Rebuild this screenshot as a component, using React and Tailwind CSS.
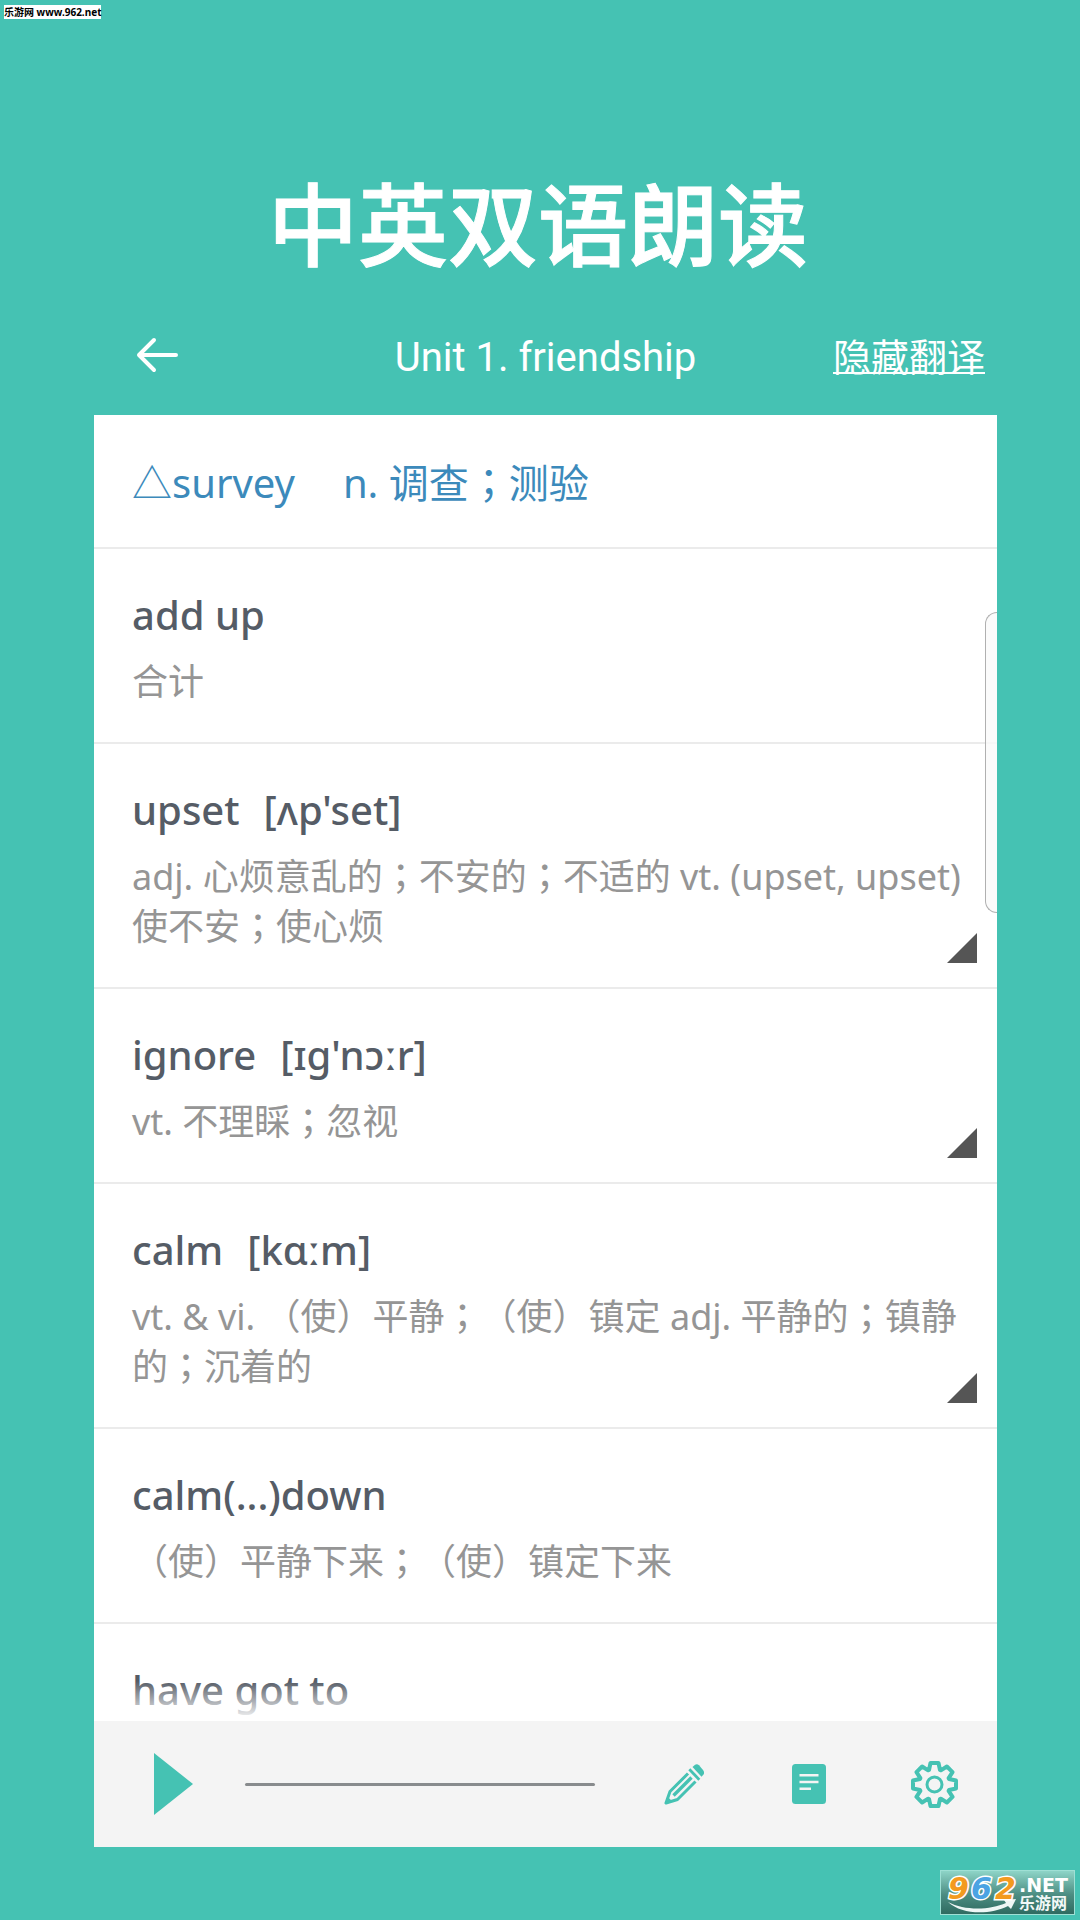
import React, { useState } from 'react';

const words = [
  { id: 1, word: 'add up', meaning: '合计' },
  {
    id: 2,
    word: 'upset',
    phonetic: "[ʌp'set]",
    meaning: 'adj. 心烦意乱的；不安的；不适的 vt. (upset, upset) 使不安；使心烦',
    expandable: true
  },
  {
    id: 3,
    word: 'ignore',
    phonetic: "[ɪg'nɔːr]",
    meaning: 'vt. 不理睬；忽视',
    expandable: true
  },
  {
    id: 4,
    word: 'calm',
    phonetic: '[kɑːm]',
    meaning: 'vt. & vi. （使）平静；（使）镇定 adj. 平静的；镇静的；沉着的',
    expandable: true
  },
  { id: 5, word: 'calm(...)down', meaning: '（使）平静下来；（使）镇定下来' },
  { id: 6, word: 'have got to' }
];

// Eight teeth around the centre of a 47x47 box
const gearPoints = Array.from({ length: 8 }, (_, i) => {
  const a = (i * Math.PI) / 4;
  return [[-5.5, -14.5], [-4, -21.5], [4, -21.5], [5.5, -14.5]]
    .map(([x, y]) => [
      23.5 + x * Math.cos(a) - y * Math.sin(a),
      23.5 + x * Math.sin(a) + y * Math.cos(a)
    ].join(','))
    .join(' ');
}).join(' ');

// The full-width semicolon sits in the middle of its cell
const Chinese = ({ text }) => text.split('；').map((part, i) => (
  <React.Fragment key={i}>
    {i > 0 && <span className="leading-none font-['Noto_Sans_CJK_TC',sans-serif]">；</span>}
    {part}
  </React.Fragment>
));

const BackIcon = () => (
  <svg className="w-[42px] h-[36px]" viewBox="0 0 42 36" fill="none" stroke="currentColor" strokeWidth="4" strokeLinecap="round" strokeLinejoin="round">
    <path d="M18 3 3 18l15 15M3 18h37" />
  </svg>
);

const PencilIcon = () => (
  <svg className="w-10 h-[41px]" viewBox="0 0 40 41" fill="currentColor">
    <path d="M28.500 3 31 .8Q33 -.4 35 1.200L39 6Q41 8.500 39.500 10.500L37.500 12.800Z" />
    <path d="M25.300 5.300 35.300 15.700" fill="none" stroke="currentColor" strokeWidth="2.800" />
    <path d="M24 9.500 6 27.500 2 39 13.500 35.500 31.500 17.500" fill="none" stroke="currentColor" strokeWidth="3" strokeLinejoin="round" />
    <path d="M27.500 13.500 9.500 31.500" fill="none" stroke="currentColor" strokeWidth="3.400" />
    <path d="M1 40 3.300 32.500 8.500 37.500Z" />
  </svg>
);

const NoteIcon = () => (
  <svg className="w-[34px] h-10" viewBox="0 0 34 40">
    <rect width="34" height="40" rx="3.500" fill="currentColor" />
    <path d="M7.500 11.300h19M7.500 18h19M7.500 24.700h11.500" stroke="#f4f4f4" strokeWidth="2.600" />
  </svg>
);

const GearIcon = () => (
  <svg className="w-[47px] h-[47px]" viewBox="0 0 47 47" fill="none" stroke="currentColor" strokeWidth="4">
    <polygon points={gearPoints} strokeLinejoin="round" />
    <circle cx="23.500" cy="23.500" r="7.500" strokeWidth="3" />
  </svg>
);

const SiteLogo = () => (
  <svg className="w-[135px] h-[45px]" viewBox="0 0 135 45" role="img" aria-label="962.NET 乐游网">
    <defs>
      <linearGradient id="logoBg" x1="0" y1="0" x2="0" y2="1">
        <stop offset="0" stopColor="#8fd6c9" />
        <stop offset="0.550" stopColor="#4c8d82" />
        <stop offset="1" stopColor="#2e6a60" />
      </linearGradient>
    </defs>
    <rect x="0.500" y="0.500" width="134" height="44" fill="url(#logoBg)" stroke="#9fe0d5" />
    <path d="M8 32C25 41 50 40 66 33L64 30 76 29 71 39 68 36C50 45 22 45 8 32Z" fill="#eef6f5" />
    <g fontFamily="DejaVu Sans, sans-serif" fontWeight="700" fontStyle="italic" fontSize="30" stroke="#fff" strokeWidth="3" paintOrder="stroke">
      <text x="8" y="29" fill="#f39a1f">9</text>
      <text x="31" y="29" fill="#4ba3e3">6</text>
      <text x="55" y="29" fill="#f39a1f">2</text>
    </g>
    <text x="79" y="22" fontSize="19" fontWeight="700" fill="#fff" fontFamily="DejaVu Sans, sans-serif">.NET</text>
    <text x="79" y="39" fontSize="16" fontWeight="700" fill="#f2f8f7" fontFamily="Noto Sans CJK SC, sans-serif">乐游网</text>
  </svg>
);

const WordRow = ({ item }) => (
  <li className="relative pl-[38px] pr-7 pt-[38px] border-t-2 border-[#ebebeb]">
    <h2 className="flex gap-6 text-[40px] leading-[56px] font-medium text-[#555c66]">
      <span>{item.word}</span>
      {item.phonetic && <span>{item.phonetic}</span>}
    </h2>
    {item.meaning && (
      <p className="pt-3.5 pb-[35px] text-[36px] leading-[50px] text-[#959595]">
        <Chinese text={item.meaning} />
      </p>
    )}
    {item.expandable && (
      <button type="button" aria-label={`展开 ${item.word}`} className="absolute right-5 bottom-6 w-[30px] h-[30px] text-[#555555]">
        <svg className="w-full h-full" viewBox="0 0 30 30" fill="currentColor">
          <path d="M30 0v30H0z" />
        </svg>
      </button>
    )}
  </li>
);

const App = () => {
  const [showMeaning, setShowMeaning] = useState(true);
  const [progress, setProgress] = useState(0);

  return (
    <div className="min-h-screen bg-[#45c2b3] font-['Noto_Sans','Noto_Sans_CJK_SC',sans-serif] [text-spacing-trim:space-all]">
      <div className="flex pt-[5px] pl-1">
        <span className="bg-white text-black text-[10px] leading-[14px] font-bold">
          乐游网 www.962.net
        </span>
      </div>

      <h1 className="pt-[136px] pr-1 text-center text-[90px] leading-[130px] font-medium text-white [-webkit-text-stroke:1px_white] font-['Noto_Sans_CJK_SC',sans-serif]">
        中英双语朗读
      </h1>

      <main className="pl-[94px] pr-[83px]">
        {/* Title bar */}
        <header className="grid grid-cols-[1fr_auto_1fr] items-center mt-4 h-[114px] px-3 pb-1.5 text-white">
          <button type="button" aria-label="返回" className="justify-self-start pl-[30px]">
            <BackIcon />
          </button>
          <h2 className="pt-1.5 text-[40px] leading-[56px] font-['Roboto',sans-serif]">Unit 1. friendship</h2>
          <button
            type="button"
            onClick={() => setShowMeaning(!showMeaning)}
            className="justify-self-end text-[38px] leading-[56px] underline decoration-2 font-['Noto_Sans_CJK_SC',sans-serif]"
          >
            隐藏翻译
          </button>
        </header>

        {/* Word list */}
        <section className="relative overflow-hidden bg-white pb-[3px]">
          <p className="flex items-baseline gap-12 px-[38px] pt-10 pb-9 text-[40px] leading-[56px] text-[#3c8abb] whitespace-nowrap">
            <span>△survey</span>
            <span><Chinese text="n. 调查；测验" /></span>
          </p>
          <ul>
            {words.map(item => (
              <WordRow key={item.id} item={showMeaning ? item : { ...item, meaning: null }} />
            ))}
          </ul>
          <div className="absolute inset-x-0 bottom-0 h-10 bg-linear-to-b from-transparent to-white"></div>
          <div className="absolute right-0 top-[197px] w-3 h-[301px] rounded-l-xl border border-r-0 border-[#b0b0b0] bg-[#fafafa]/80"></div>
        </section>

        {/* Player */}
        <footer className="flex items-center h-[126px] pl-[60px] pr-[39px] bg-[#f4f4f4] text-[#45c2b3]">
          <button type="button" aria-label="播放">
            <svg className="w-[39px] h-[62px]" viewBox="0 0 39 62" fill="currentColor">
              <path d="M0 0 39 31 0 62z" />
            </svg>
          </button>
          <input
            type="range"
            aria-label="播放进度"
            value={progress}
            onChange={(e) => setProgress(Number(e.target.value))}
            className="flex-1 min-w-0 ml-[52px] mr-[69px] h-[3px] appearance-none rounded-full bg-[#888b8d] [&::-webkit-slider-thumb]:appearance-none"
          />
          <button type="button" aria-label="编辑"><PencilIcon /></button>
          <button type="button" aria-label="笔记" className="ml-[88px]"><NoteIcon /></button>
          <button type="button" aria-label="设置" className="ml-[85px]"><GearIcon /></button>
        </footer>
      </main>

      <div className="flex justify-end pt-[23px] pr-[5px] pb-[5px]">
        <SiteLogo />
      </div>
    </div>
  );
};

export default App;
